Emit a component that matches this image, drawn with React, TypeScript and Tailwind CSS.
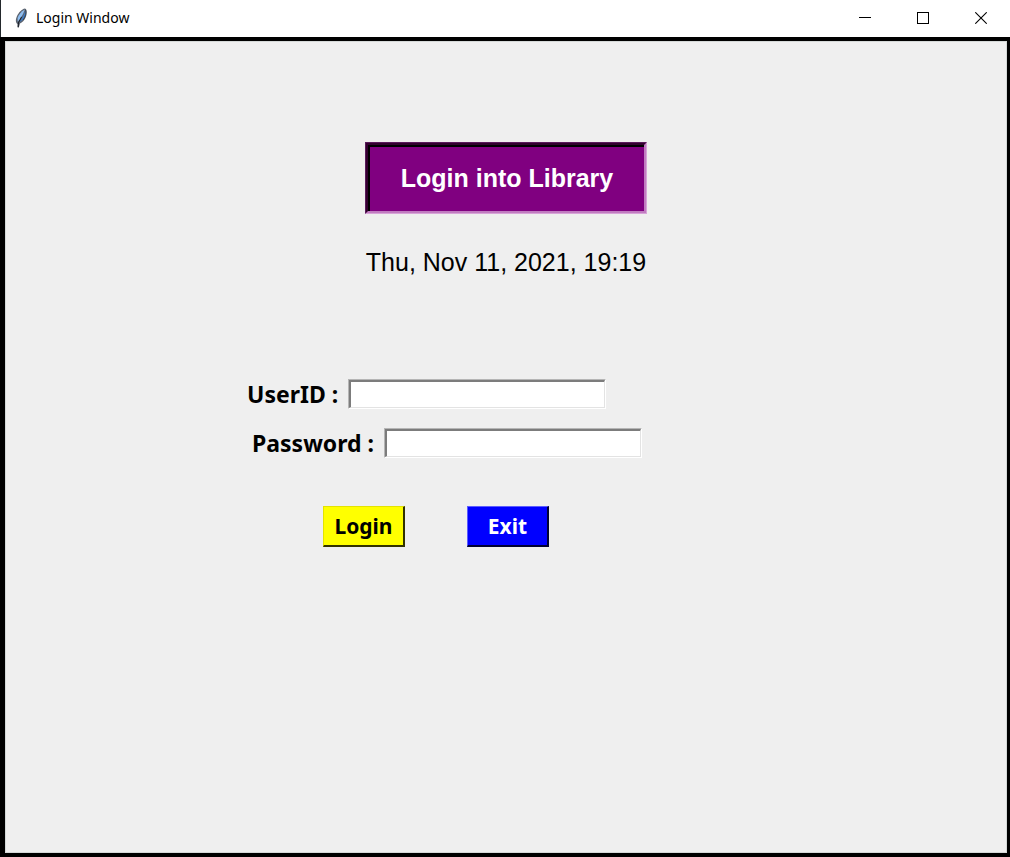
import React from "react";

function FeatherIcon() {
  return (
    <svg width="14" height="20" viewBox="0 0 14 20" aria-hidden="true">
      <path d="M11 0.4 C13.2 1 13.2 6 11.6 9.6 C10.4 12.4 8.2 14.8 6 15.4 L4.8 19.4 L3.6 19.2 L3.6 16 C1.4 14.6 1.5 11.4 2.8 8.4 C4.6 4.4 7.8 1 11 0.4 Z" fill="#5c6470" />
      <path d="M10.8 1.4 C7 3.6 4.4 7 3.6 10 L3.6 13.8 C6.2 11 9 7 10.8 1.4 Z" fill="#8dbdf0" />
      <path d="M11.7 2 C10.4 6.4 8 10.6 5 14.2 C9 13 12.6 7.6 11.7 2 Z" fill="#3b7cc9" />
      <path d="M7.6 8.8 C6.6 11 5.4 13 4.4 14.8 L4.2 19.2" fill="none" stroke="#14181f" strokeWidth="1" />
      <path d="M11.6 1.6 C12.4 4.8 11.6 8.4 9.2 12" fill="none" stroke="#2b323c" strokeWidth="0.7" />
    </svg>
  );
}

function TitleBar() {
  const control = "flex h-full w-[58px] items-center justify-center";
  return (
    <header className="flex h-[37px] shrink-0 items-center border-l border-[#23282c] bg-white pb-px pl-[13px] text-black">
      <FeatherIcon />
      <h1 className="ml-2 font-['Noto_Sans','Open_Sans',sans-serif] text-[14px] leading-5">Login Window</h1>
      <div className="ml-auto flex h-full">
        <button type="button" aria-label="Minimize" className={control}>
          <svg width="12" height="12" viewBox="0 0 12 12" shapeRendering="crispEdges">
            <path d="M0 5.5H12" stroke="#000" />
          </svg>
        </button>
        <button type="button" aria-label="Maximize" className={control}>
          <svg width="12" height="12" viewBox="0 0 12 12" shapeRendering="crispEdges">
            <rect x="0.5" y="0.5" width="11" height="11" fill="none" stroke="#000" />
          </svg>
        </button>
        <button type="button" aria-label="Close" className={control}>
          <svg width="12" height="12" viewBox="0 0 12 12">
            <path d="M0.3 0.3L11.7 11.7M11.7 0.3L0.3 11.7" stroke="#000" strokeWidth="1.1" />
          </svg>
        </button>
      </div>
    </header>
  );
}

function Field({ id, label, type }: { id: string; label: string; type: string }) {
  return (
    <div className="flex items-center gap-[10px]">
      <label htmlFor={id} className="text-[23px] leading-[30px] whitespace-nowrap">
        {label}
      </label>
      <span className="flex border border-t-[#b5b5b5] border-r-white border-b-white border-l-[#b5b5b5]">
        <input
          id={id}
          type={type}
          className="h-[28px] w-[256px] border-t-2 border-r border-b border-l-2 border-t-[#7c7c7c] border-r-[#e3e3e3] border-b-[#e3e3e3] border-l-[#7c7c7c] bg-white px-1 text-base font-normal outline-none"
        />
      </span>
    </div>
  );
}

export default function App() {
  return (
    <div className="flex min-h-screen flex-col bg-black">
      <TitleBar />
      <main className="mt-[4px] mr-[3px] mb-[4px] ml-[5px] flex grow flex-col items-center border border-[#d5d9d8] bg-[#efefef] pt-[100px] text-black">
        <div className="border border-t-[#5a1a5a] border-r-[#d9a3d9] border-b-[#d9a3d9] border-l-[#5a1a5a]">
          <div className="border-2 border-t-[#33002f] border-r-[#c07cc0] border-b-[#c07cc0] border-l-[#33002f]">
            <h2 className="border-t-2 border-l-2 border-black bg-[#800080] px-[31px] pt-[15px] pb-[17px] font-['Liberation_Sans',Arial,sans-serif] text-[25px] leading-8 font-bold text-white">
              Login into Library
            </h2>
          </div>
        </div>
        <p className="mt-8 font-['Liberation_Sans',Arial,sans-serif] text-[25px] leading-8">
          Thu, Nov 11, 2021, 19:19
        </p>
        <form
          className="mt-[101px] w-[518px] max-w-full font-['Noto_Sans','Open_Sans',sans-serif] font-bold"
          onSubmit={(event) => event.preventDefault()}
        >
          <Field id="user-id" label="UserID :" type="text" />
          <div className="mt-[19px] pl-[5px]">
            <Field id="password" label="Password :" type="password" />
          </div>
          <div className="mt-12 flex gap-[62px] pl-[76px] text-[21px]">
            <button
              type="submit"
              className="h-[41px] w-[82px] border-t border-r-2 border-b-2 border-l border-t-[#e3e300] border-r-[#333300] border-b-[#333300] border-l-[#e3e300] bg-[#ffff00] leading-8 text-black"
            >
              Login
            </button>
            <button
              type="button"
              className="h-[41px] w-[82px] border-t border-r-2 border-b-2 border-l border-t-[#5c5cff] border-r-[#000033] border-b-[#000033] border-l-[#5c5cff] bg-[#0000ff] leading-8 text-white"
            >
              Exit
            </button>
          </div>
        </form>
      </main>
    </div>
  );
}
